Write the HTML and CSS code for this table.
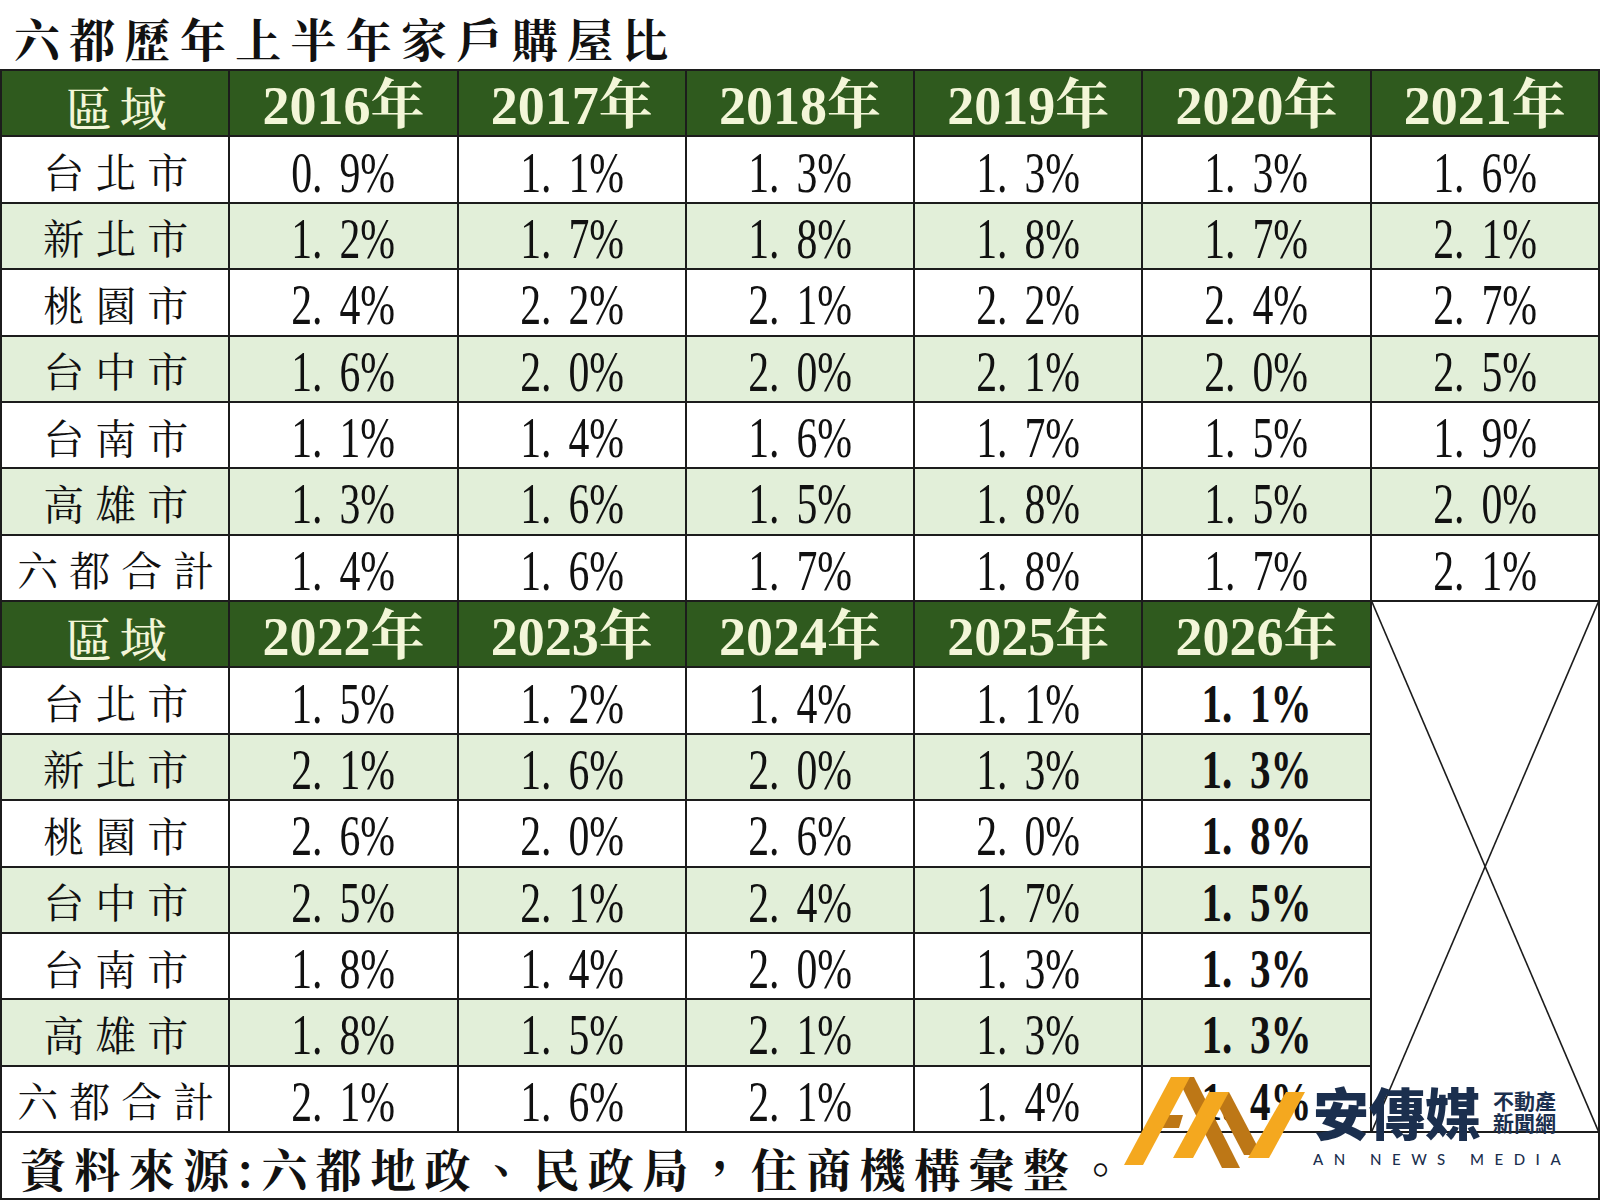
FILE: index.html
```html
<!DOCTYPE html>
<html lang="zh-Hant">
<head>
<meta charset="utf-8">
<title>六都歷年上半年家戶購屋比</title>
<link rel="stylesheet" href="styles.css">
</head>
<body>
<div class="page">
  <h1 class="title">六都歷年上半年家戶購屋比</h1>
  <div class="table">
    <div class="c h area">區域</div>
    <div class="c h">2016年</div>
    <div class="c h">2017年</div>
    <div class="c h">2018年</div>
    <div class="c h">2019年</div>
    <div class="c h">2020年</div>
    <div class="c h">2021年</div>

    <div class="c lab">台北市</div>
    <div class="c"><span class="v">0. 9%</span></div>
    <div class="c"><span class="v">1. 1%</span></div>
    <div class="c"><span class="v">1. 3%</span></div>
    <div class="c"><span class="v">1. 3%</span></div>
    <div class="c"><span class="v">1. 3%</span></div>
    <div class="c"><span class="v">1. 6%</span></div>

    <div class="c g lab">新北市</div>
    <div class="c g"><span class="v">1. 2%</span></div>
    <div class="c g"><span class="v">1. 7%</span></div>
    <div class="c g"><span class="v">1. 8%</span></div>
    <div class="c g"><span class="v">1. 8%</span></div>
    <div class="c g"><span class="v">1. 7%</span></div>
    <div class="c g"><span class="v">2. 1%</span></div>

    <div class="c lab">桃園市</div>
    <div class="c"><span class="v">2. 4%</span></div>
    <div class="c"><span class="v">2. 2%</span></div>
    <div class="c"><span class="v">2. 1%</span></div>
    <div class="c"><span class="v">2. 2%</span></div>
    <div class="c"><span class="v">2. 4%</span></div>
    <div class="c"><span class="v">2. 7%</span></div>

    <div class="c g lab">台中市</div>
    <div class="c g"><span class="v">1. 6%</span></div>
    <div class="c g"><span class="v">2. 0%</span></div>
    <div class="c g"><span class="v">2. 0%</span></div>
    <div class="c g"><span class="v">2. 1%</span></div>
    <div class="c g"><span class="v">2. 0%</span></div>
    <div class="c g"><span class="v">2. 5%</span></div>

    <div class="c lab">台南市</div>
    <div class="c"><span class="v">1. 1%</span></div>
    <div class="c"><span class="v">1. 4%</span></div>
    <div class="c"><span class="v">1. 6%</span></div>
    <div class="c"><span class="v">1. 7%</span></div>
    <div class="c"><span class="v">1. 5%</span></div>
    <div class="c"><span class="v">1. 9%</span></div>

    <div class="c g lab">高雄市</div>
    <div class="c g"><span class="v">1. 3%</span></div>
    <div class="c g"><span class="v">1. 6%</span></div>
    <div class="c g"><span class="v">1. 5%</span></div>
    <div class="c g"><span class="v">1. 8%</span></div>
    <div class="c g"><span class="v">1. 5%</span></div>
    <div class="c g"><span class="v">2. 0%</span></div>

    <div class="c lab">六都合計</div>
    <div class="c"><span class="v">1. 4%</span></div>
    <div class="c"><span class="v">1. 6%</span></div>
    <div class="c"><span class="v">1. 7%</span></div>
    <div class="c"><span class="v">1. 8%</span></div>
    <div class="c"><span class="v">1. 7%</span></div>
    <div class="c"><span class="v">2. 1%</span></div>

    <div class="xcell">
      <svg viewBox="0 0 100 100" preserveAspectRatio="none">
        <line x1="0" y1="0" x2="100" y2="100" vector-effect="non-scaling-stroke"/>
        <line x1="100" y1="0" x2="0" y2="100" vector-effect="non-scaling-stroke"/>
      </svg>
    </div>

    <div class="c h area">區域</div>
    <div class="c h">2022年</div>
    <div class="c h">2023年</div>
    <div class="c h">2024年</div>
    <div class="c h">2025年</div>
    <div class="c h">2026年</div>

    <div class="c lab">台北市</div>
    <div class="c"><span class="v">1. 5%</span></div>
    <div class="c"><span class="v">1. 2%</span></div>
    <div class="c"><span class="v">1. 4%</span></div>
    <div class="c"><span class="v">1. 1%</span></div>
    <div class="c"><span class="v b">1. 1%</span></div>

    <div class="c g lab">新北市</div>
    <div class="c g"><span class="v">2. 1%</span></div>
    <div class="c g"><span class="v">1. 6%</span></div>
    <div class="c g"><span class="v">2. 0%</span></div>
    <div class="c g"><span class="v">1. 3%</span></div>
    <div class="c g"><span class="v b">1. 3%</span></div>

    <div class="c lab">桃園市</div>
    <div class="c"><span class="v">2. 6%</span></div>
    <div class="c"><span class="v">2. 0%</span></div>
    <div class="c"><span class="v">2. 6%</span></div>
    <div class="c"><span class="v">2. 0%</span></div>
    <div class="c"><span class="v b">1. 8%</span></div>

    <div class="c g lab">台中市</div>
    <div class="c g"><span class="v">2. 5%</span></div>
    <div class="c g"><span class="v">2. 1%</span></div>
    <div class="c g"><span class="v">2. 4%</span></div>
    <div class="c g"><span class="v">1. 7%</span></div>
    <div class="c g"><span class="v b">1. 5%</span></div>

    <div class="c lab">台南市</div>
    <div class="c"><span class="v">1. 8%</span></div>
    <div class="c"><span class="v">1. 4%</span></div>
    <div class="c"><span class="v">2. 0%</span></div>
    <div class="c"><span class="v">1. 3%</span></div>
    <div class="c"><span class="v b">1. 3%</span></div>

    <div class="c g lab">高雄市</div>
    <div class="c g"><span class="v">1. 8%</span></div>
    <div class="c g"><span class="v">1. 5%</span></div>
    <div class="c g"><span class="v">2. 1%</span></div>
    <div class="c g"><span class="v">1. 3%</span></div>
    <div class="c g"><span class="v b">1. 3%</span></div>

    <div class="c lab">六都合計</div>
    <div class="c"><span class="v">2. 1%</span></div>
    <div class="c"><span class="v">1. 6%</span></div>
    <div class="c"><span class="v">2. 1%</span></div>
    <div class="c"><span class="v">1. 4%</span></div>
    <div class="c"><span class="v b">1. 4%</span></div>

    <div class="c foot">資料來源:六都地政、民政局，住商機構彙整。</div>
  </div>

  <div class="logo">
    <svg class="logo-mark" viewBox="1118 1074 188 96" width="188" height="96">
      <polygon class="brown" points="1177,1077 1194,1077 1240,1168 1222,1168"/>
      <polygon class="brown" points="1161,1115 1183,1115 1179,1128 1156,1128"/>
      <polygon class="brown" points="1211,1092 1229,1092 1262,1155 1244,1155"/>
      <polygon class="gold" points="1124,1165 1143,1165 1190,1077 1171,1077"/>
      <polygon class="gold" points="1173,1158 1193,1158 1229,1092 1209,1092"/>
      <polygon class="gold" points="1248,1158 1269,1158 1305,1092 1286,1092"/>
    </svg>
    <div class="brand">
      <div class="brand-top">
        <span class="brand-name">安傳媒</span>
        <span class="brand-sub"><span>不動產</span><span>新聞網</span></span>
      </div>
      <div class="brand-en">AN NEWS MEDIA</div>
    </div>
  </div>
</div>
</body>
</html>
```

FILE: styles.css
```css
* { box-sizing: border-box; }

body {
  margin: 0;
  background: #ffffff;
}

.page {
  position: relative;
  width: 1600px;
  height: 1200px;
  overflow: hidden;
  background: #ffffff;
  color: #111111;
  font-family: "Noto Serif CJK TC", "Noto Sans CJK TC", serif;
}

.title {
  margin: 0;
  height: 69px;
  display: flex;
  align-items: center;
  padding: 4px 0 0 14px;
  font-size: 46px;
  font-weight: 700;
  letter-spacing: 9.3px;
  line-height: 1;
  white-space: nowrap;
}

.table {
  display: grid;
  grid-template-columns: repeat(7, minmax(0, 1fr));
  grid-template-rows: repeat(16, minmax(0, 1fr)) 65px;
  gap: 2px;
  padding: 2px;
  height: 1131px;
  background: #1c1c1c;
}

.c {
  background: #ffffff;
  display: flex;
  align-items: center;
  justify-content: center;
  line-height: 1;
  min-width: 0;
  min-height: 0;
  white-space: nowrap;
}

.g { background: #e2efd9; }

.h {
  background: #2f5a1e;
  color: #f3f6d8;
  font-family: "Liberation Serif", "Noto Serif CJK TC", "Noto Sans CJK TC", serif;
  font-size: 54px;
  font-weight: 700;
  padding-top: 5px;
}

.h.area {
  font-family: "Noto Serif CJK TC", "Noto Sans CJK TC", serif;
  font-size: 47px;
  font-weight: 500;
  letter-spacing: 7px;
  padding-left: 9px;
}

.lab {
  font-size: 41px;
  letter-spacing: 11px;
  padding-left: 12px;
  padding-top: 2px;
}

.v {
  display: inline-block;
  font-family: "Liberation Serif", serif;
  font-size: 58px;
  line-height: 1;
  padding-top: 6px;
  white-space: pre;
  word-spacing: 9px;
  transform: scaleX(0.72);
}

.v.b {
  font-weight: 700;
  font-size: 54px;
  word-spacing: 10px;
  transform: scaleX(0.76);
}

.xcell {
  grid-column: 7;
  grid-row: 9 / span 8;
  background: #ffffff;
}

.xcell svg {
  display: block;
  width: 100%;
  height: 100%;
}

.xcell line {
  stroke: #1c1c1c;
  stroke-width: 1.6;
}

.foot {
  grid-column: 1 / -1;
  justify-content: flex-start;
  padding: 2px 0 0 18px;
  font-size: 46px;
  font-weight: 700;
  letter-spacing: 8.4px;
}

.logo {
  position: absolute;
  left: 1118px;
  top: 1074px;
  display: flex;
  align-items: flex-start;
  gap: 7px;
}

.logo-mark { display: block; }
.logo-mark .gold { fill: #f4a81f; }
.logo-mark .brown { fill: #bd7716; }

.brand {
  display: flex;
  flex-direction: column;
  padding-top: 9px;
  color: #1b2f4e;
}

.brand-top {
  display: flex;
  align-items: center;
  gap: 12px;
}

.brand-name {
  font-family: "Noto Sans CJK TC", sans-serif;
  font-size: 56px;
  font-weight: 900;
  line-height: 1;
}

.brand-sub {
  display: flex;
  flex-direction: column;
  font-family: "Noto Sans CJK TC", sans-serif;
  font-size: 21px;
  font-weight: 700;
  line-height: 22px;
}

.brand-en {
  margin-top: 13px;
  font-family: "Lato", "Open Sans", sans-serif;
  font-size: 15px;
  font-weight: 500;
  letter-spacing: 10.5px;
  line-height: 1;
  white-space: nowrap;
}
```
